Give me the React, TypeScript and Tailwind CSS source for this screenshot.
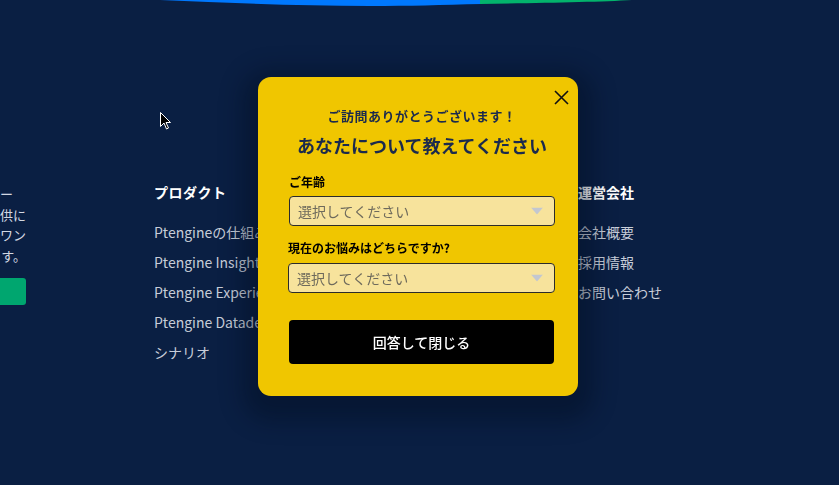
const FONT = { fontFamily: '"Noto Sans CJK JP", "Noto Sans", sans-serif' };

const PRODUCTS = ['Ptengineの仕組み', 'Ptengine Insight', 'Ptengine Experience', 'Ptengine Datadeck', 'シナリオ'];
const COMPANY = ['会社概要', '採用情報', 'お問い合わせ'];

const SELECT_CLS = "w-full h-[30px] appearance-none bg-[#f7e39c] border border-[#2b2b2b] rounded-[4px] pl-[8px] pr-8 text-[14px] text-[#6e6a5c] outline-none";
const LABEL_CLS = "text-[12px] leading-[16px] font-bold text-black";

function Caret() {
  return (
    <svg width="12" height="7" viewBox="0 0 12 7" className="absolute right-[12px] top-1/2 -translate-y-1/2 pointer-events-none">
      <path d="M0 0 L12 0 L6 7 Z" fill="#c3c7d0" />
    </svg>
  );
}

function Modal() {
  return (
    <div className="fixed inset-0 flex items-center justify-center pb-[12px] pr-[3px]">
      <div className="relative w-[320px] h-[319px] bg-[#f0c600] rounded-[13px] pt-[30px] pl-[31px] pr-[23px] shadow-[0_9px_22px_16px_rgba(3,12,30,0.4)]">
        <button className="absolute right-[9px] top-[12px] w-[16px] h-[16px] flex items-center justify-center">
          <svg width="15" height="15" viewBox="0 0 15 15">
            <path d="M1 1 L14 14 M14 1 L1 14" stroke="#111" strokeWidth="1.6" />
          </svg>
        </button>
        <p className="text-center text-[13px] leading-[18px] font-bold text-[#1b2a4d] tracking-[0.5px]">ご訪問ありがとうございます！</p>
        <h2 className="mt-[7px] text-center text-[18px] leading-[26px] font-bold text-[#1b2a4d]">あなたについて教えてください</h2>

        <div className="mt-[16px] flex flex-col">
          <label className={LABEL_CLS}>ご年齢</label>
          <div className="relative mt-[6px]">
            <select className={SELECT_CLS} defaultValue="">
              <option value="">選択してください</option>
            </select>
            <Caret />
          </div>
          <label className={LABEL_CLS + ' mt-[14px] -ml-[1px]'}>現在のお悩みはどちらですか?</label>
          <div className="relative mt-[7px] -ml-[1px]">
            <select className={SELECT_CLS} defaultValue="">
              <option value="">選択してください</option>
            </select>
            <Caret />
          </div>
          <button className="mt-[27px] h-[44px] w-[265px] bg-black rounded-[4px] text-white text-[14px] font-medium">回答して閉じる</button>
        </div>
      </div>
    </div>
  );
}

export default function App() {
  return (
    <div className="relative w-full h-[485px] bg-[#0a1f43] overflow-hidden text-white" style={FONT}>

      {/* top blob */}
      <svg width="839" height="8" viewBox="0 0 839 8" className="block">
        <path d="M160 0 L482 0 L482 4 C440 5 410 6 370 6 C300 6 230 3 160 0 Z" fill="#0078fe" />
        <path d="M480 0 L632 0 C600 2 540 3 480 4 Z" fill="#03b36c" />
      </svg>

      {/* cursor */}
      <svg width="12" height="19" viewBox="0 0 12 19" className="absolute left-[160px] top-[112px]">
        <path d="M0.5 0.5 L0.5 14.5 L4 11 L6.5 17 L8.5 16 L6 10.5 L10.5 10.5 Z" fill="#000" stroke="#fff" strokeWidth="1" />
      </svg>

      {/* footer */}
      <div className="flex mt-[174px]">
        <div className="-ml-[200px] mt-[2px] w-[226px] flex flex-col items-end text-[13px] leading-[20.5px] text-[#d3d8e2]">
          <span className="whitespace-nowrap mr-[13px]">データ分析プラットフォー</span>
          <span className="whitespace-nowrap">サイト改善の仕組みを提供供に</span>
          <span className="whitespace-nowrap">成長を支えるオールインワン</span>
          <span className="whitespace-nowrap">ツールを提供していま す。</span>
          <div className="mt-[12px] w-[130px] h-[27px] bg-[#00a66f] rounded-[3px]" />
        </div>

        <div className="ml-[128px] w-[212px] flex flex-col">
          <h3 className="text-[14px] leading-[20px] font-bold text-white tracking-[0.5px]">プロダクト</h3>
          <ul className="mt-[20px] flex flex-col gap-[10px]">
            {PRODUCTS.map(p => (
              <li key={p} className="text-[14px] leading-[20px] text-[#c7cdd9] whitespace-nowrap">{p}</li>
            ))}
          </ul>
        </div>

        <div className="w-[212px]" />

        <div className="flex flex-col">
          <h3 className="text-[14px] leading-[20px] font-bold text-white">運営会社</h3>
          <ul className="mt-[20px] flex flex-col gap-[10px]">
            {COMPANY.map(c => (
              <li key={c} className="text-[14px] leading-[20px] text-[#c7cdd9] whitespace-nowrap">{c}</li>
            ))}
          </ul>
        </div>
      </div>

      <Modal />
    </div>
  );
}
